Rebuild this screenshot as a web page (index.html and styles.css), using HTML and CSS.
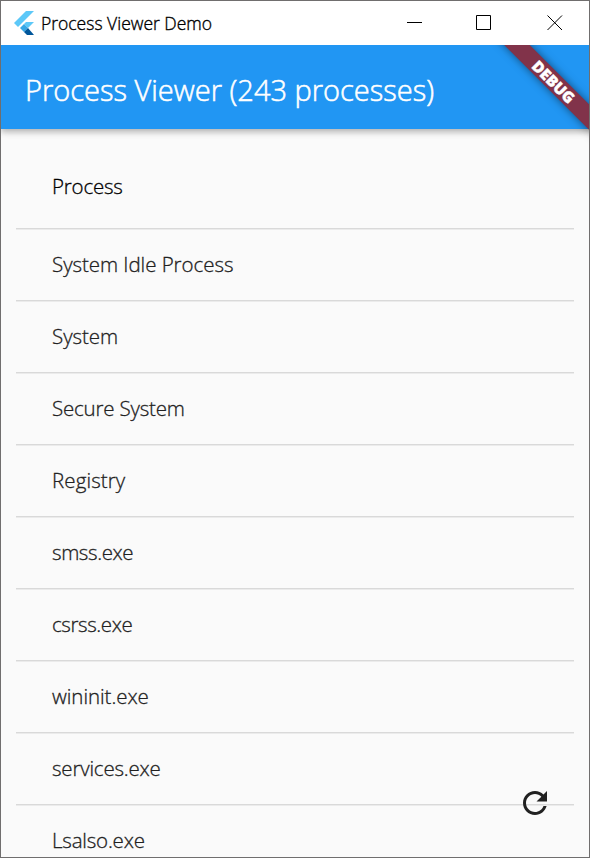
FILE: index.html
```html
<!DOCTYPE html>
<html lang="en">
<head>
<meta charset="utf-8">
<title>Process Viewer Demo</title>
<link rel="stylesheet" href="styles.css">
</head>
<body>
<div class="window">
  <header class="titlebar">
    <svg class="logo" width="20" height="24" viewBox="0 0 20 24">
      <path d="M12 0h8L4 16l-4-4z" fill="#5cc8f8"/>
      <path d="M12 11h8l-6 6-4-4z" fill="#5cc8f8"/>
      <path d="M6 17l4-4 4 4-4 4z" fill="#35a7e6"/>
      <path d="M10 21l4-4 6 7h-7z" fill="#01579b"/>
    </svg>
    <span class="caption">Process Viewer Demo</span>
    <svg class="controls" width="156" height="16" viewBox="0 0 156 16" fill="none" stroke="#000">
      <path d="M0 7.500h15M69.500 .5h14v14h-14z"/>
      <path d="M140.500 .5l14.500 14.500M155 .5l-14.500 14.500"/>
    </svg>
  </header>
  <div class="app">
    <div class="appbar"><h1 class="title">Process Viewer (243 processes)</h1></div>
    <main class="table">
      <div class="row head snug"><span>Process</span></div>
      <div class="row"><span>System Idle Process</span></div>
      <div class="row"><span>System</span></div>
      <div class="row snug"><span>Secure System</span></div>
      <div class="row loose"><span>Registry</span></div>
      <div class="row tight"><span>smss.exe</span></div>
      <div class="row tight"><span>csrss.exe</span></div>
      <div class="row"><span>wininit.exe</span></div>
      <div class="row snug"><span>services.exe</span></div>
      <div class="row snug"><span>Lsalso.exe</span></div>
    </main>
    <div class="banner"><span>DEBUG</span></div>
    <svg class="refresh" width="36" height="36" viewBox="0 0 24 24" fill="#212121">
      <path d="M17.650 6.350C16.200 4.900 14.210 4 12 4c-4.420 0-7.990 3.580-7.990 8s3.570 8 7.990 8c3.730 0 6.840-2.550 7.730-6h-2.080c-.82 2.330-3.040 4-5.650 4-3.310 0-6-2.690-6-6s2.690-6 6-6c1.660 0 3.140.69 4.220 1.780L13 11h7V4l-2.350 2.350z"/>
    </svg>
  </div>
</div>
</body>
</html>
```
FILE: styles.css
```css
* { box-sizing: border-box; }
body { margin: 0; font-family: "Open Sans", "Noto Sans", sans-serif; }
.window {
  width: 590px;
  height: 858px;
  border: 1px solid #706e6e;
  background: #fafafa;
  overflow: hidden;
  display: flex;
  flex-direction: column;
}
.titlebar {
  height: 44px;
  flex: none;
  background: #fff;
  display: flex;
  align-items: center;
  padding: 0 26px 0 13px;
}
.caption {
  margin-left: 7px;
  font-size: 17.500px;
  font-weight: 300;
  -webkit-text-stroke: .35px #000;
  color: #000;
  white-space: nowrap;
}
.controls { margin-left: auto; }
.app { position: relative; flex: 1; overflow: hidden; }
.appbar {
  position: relative;
  height: 84px;
  background: #2196f3;
  box-shadow: 0 3px 6px rgba(0, 0, 0, .22), 0 1px 9px rgba(0, 0, 0, .12);
  display: flex;
  align-items: center;
  padding: 4px 24px 0;
}
.title {
  margin: 0;
  font-size: 29px;
  font-weight: 300;
  -webkit-text-stroke: .55px #fff;
  color: #fff;
  white-space: nowrap;
}
.table { padding: 15px 15px 0; }
.row {
  height: 72px;
  padding-left: 36px;
  display: flex;
  align-items: center;
  box-shadow: 0 1px #d9d9d9, 0 2px #ebebeb;
  font-size: 20.500px;
  font-weight: 300;
  -webkit-text-stroke: .3px currentColor;
  letter-spacing: -.05px;
  color: #212121;
  white-space: nowrap;
}
.row.snug { letter-spacing: -.2px; }
.row.tight { letter-spacing: -.4px; }
.row.loose { letter-spacing: .1px; }
.head { height: 84px; color: #000; }
.banner {
  position: absolute;
  left: 477px;
  top: 27px;
  width: 150px;
  height: 18px;
  background: #81334a;
  box-shadow: 0 0 9px rgba(0, 0, 0, .5);
  transform: rotate(45deg);
  display: flex;
  align-items: center;
  justify-content: center;
  color: #fff;
  font-size: 15.300px;
  font-weight: 900;
  line-height: 18px;
}
.banner span { padding-left: 2px; -webkit-text-stroke: .4px #fff; }
.refresh { position: absolute; left: 516px; top: 740px; }
```
